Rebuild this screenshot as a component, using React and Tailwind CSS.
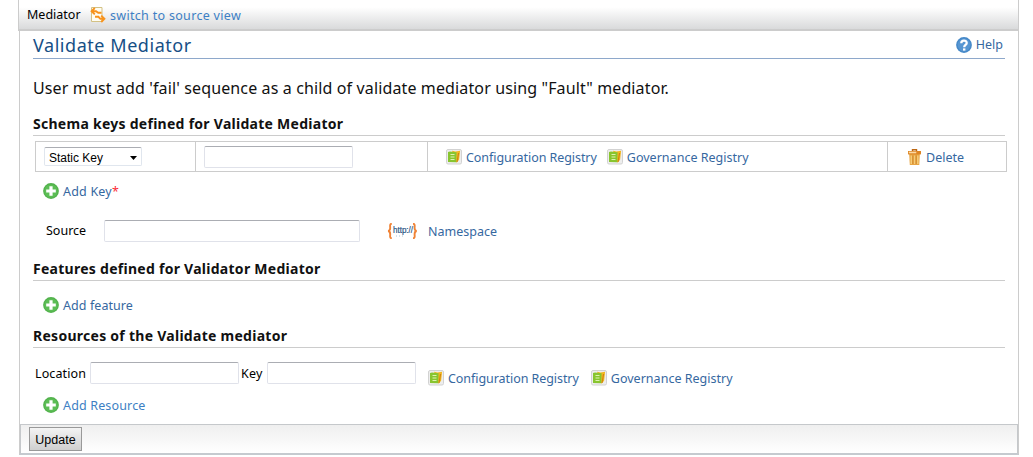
function AddIcon() {
  return (
    <svg className="h-4 w-4 shrink-0" viewBox="0 0 16 16">
      <circle cx="8" cy="8" r="7.9" fill="#52b24c" />
      <circle cx="8" cy="8" r="6.6" fill="#5cbd55" />
      <path d="M6.4 3.2h3.2v3.2h3.2v3.2H9.6v3.2H6.4V9.6H3.2V6.4h3.2z" fill="#fff" />
    </svg>
  );
}

function RegistryIcon() {
  return (
    <svg className="h-4 w-4 shrink-0" viewBox="0 0 16 16">
      <rect x="0.5" y="0.5" width="15" height="14.5" rx="1.5" fill="#ededed" stroke="#d2d2d2" />
      <path d="M6 1.8l3.500.8 4.600-.8-1 9-2.600 3z" fill="#f3b71f" />
      <path d="M12.600 4l-1.600 9" stroke="#cf8512" strokeWidth="1.200" />
      <path d="M2 3l2-.5 6.600.8-.4 9.900-8.200-.2z" fill="#88c52f" />
      <path d="M4.500 5.500h4M4.500 8h4M4.500 10.500h4" stroke="#def3b0" strokeWidth="1.100" />
    </svg>
  );
}

function SwitchIcon() {
  return (
    <svg className="h-4 w-4 shrink-0" viewBox="0 0 16 16">
      <path d="M1.500.5h10.500v14H1.500z" fill="#fffdf2" stroke="#d3c184" />
      <path d="M4.800 1L1.600 4.200 4.800 7.400M1.800 4.200H6l2.200 1.600h3.300M11.200 8.600l3.200 3.200-3.200 3.200M14 11.800h-3.600l-2-2H5" fill="none" stroke="#f8931d" strokeWidth="1.900" />
    </svg>
  );
}

function HelpIcon() {
  return (
    <svg className="h-4 w-4 shrink-0" viewBox="0 0 16 16">
      <circle cx="8" cy="8" r="7.9" fill="#4588c8" />
      <circle cx="8" cy="8" r="6.400" fill="#5796d2" />
      <path d="M5.300 6.200C5.300 2.700 10.700 2.900 10.700 5.900c0 2-2.500 2-2.500 4.300" fill="none" stroke="#fff" strokeWidth="2.300" />
      <rect x="7" y="11.400" width="2.400" height="2.200" fill="#fff" />
    </svg>
  );
}

function TrashIcon() {
  return (
    <svg className="h-4 w-[13px] shrink-0" viewBox="0 0 13 16">
      <path d="M4.500 2.200V.8h4v1.400" fill="none" stroke="#bd6712" strokeWidth="1.400" />
      <path d="M1.200 5h10.600l-.5 11H1.800z" fill="#e8a543" />
      <path d="M3.300 6.500v8.500M6.500 6.500v8.500M9.800 6.500v8.500" stroke="#f6cc78" strokeWidth="1.500" />
      <path d="M4.900 6.500v8.500M8.200 6.500v8.500" stroke="#c98128" strokeWidth=".8" />
      <path d="M0 2h13v3.400H0z" fill="#dd8524" />
      <path d="M.8 3.500h7.500" stroke="#fbd9a4" strokeWidth="1.600" />
    </svg>
  );
}

function NamespaceIcon() {
  return (
    <svg className="h-4 w-[31px] shrink-0" viewBox="0 0 31 16">
      <path d="M4.800.8C2.500.8 3.200 3 3.200 5s-.4 2.600-2 3c1.600.4 2 1 2 3s-.7 4.200 1.600 4.200M26 .8c2.300 0 1.600 2.200 1.600 4.200s.4 2.600 2 3c-1.600.4-2 1-2 3s.7 4.200-1.600 4.200" fill="none" stroke="#f08336" strokeWidth="1.900" />
      <text x="6" y="9.500" fontSize="9.500" textLength="20" lengthAdjust="spacingAndGlyphs" fill="#245282" stroke="#245282" strokeWidth=".2" fontFamily="Liberation Sans, sans-serif">http://</text>
      <path d="M9 13h1M12 13h1M15 13h1" stroke="#a9c8dc" />
    </svg>
  );
}

const field =
  "shrink-0 rounded-[2px] border border-[#e0e2ea] border-t-[#abadb3] bg-white outline-none";

function SectionHeading({ children, className }) {
  return (
    <h2 className={`ml-[13px] mr-[13px] flex shrink-0 items-end whitespace-nowrap border-b border-[#cccccc] pb-[2px] text-[14px] font-bold leading-[18px] text-[#111] ${className}`}>
      {children}
    </h2>
  );
}

function Registries({ gap }) {
  return (
    <div className={`flex items-center ${gap}`}>
      <a className="flex items-center gap-1">
        <RegistryIcon />
        <span className="pt-[2px] tracking-[-0.06px]">Configuration Registry</span>
      </a>
      <a className="flex items-center gap-1">
        <RegistryIcon />
        <span className="pt-[2px] tracking-[0.02px]">Governance Registry</span>
      </a>
    </div>
  );
}

export default function App() {
  return (
    <div className="h-[457px] w-[1033px] overflow-hidden bg-white pl-[18px] font-['Noto_Sans','Open_Sans',sans-serif] text-[12.5px] leading-4 whitespace-nowrap text-[#36689f]">
      <header className="flex h-[31px] w-[1001px] items-center border-x border-b-2 border-[#cccccc] bg-linear-to-b from-white from-25% to-[#d9dadb] pl-2">
        <span className="w-[63px] text-black">Mediator</span>
        <SwitchIcon />
        <a className="ml-1 pt-[2px] tracking-[0.31px] text-[#3d7fc4]">switch to source view</a>
      </header>

      <main className="ml-px flex h-[424px] w-[1000px] flex-col border-x border-b-2 border-[#cccccc] border-b-[#c5cacf]">
        <div className="mx-[13px] flex h-7 shrink-0 items-center justify-between border-b border-[#8ea8cb]">
          <h1 className="text-[18px] leading-6 tracking-[0.55px] text-[#164f86]">Validate Mediator</h1>
          <a className="flex items-center gap-1 pr-[2px]">
            <HelpIcon />
            <span>Help</span>
          </a>
        </div>

        <p className="ml-[13px] mt-[17px] mb-px h-6 shrink-0 text-[16px] leading-6 tracking-[0.13px] text-[#111]">
          User must add 'fail' sequence as a child of validate mediator using "Fault" mediator.
        </p>

        <SectionHeading className="h-[35px] tracking-[0.27px]">Schema keys defined for Validate Mediator</SectionHeading>

        <div className="ml-[15px] mt-[5px] grid h-[31px] w-[972px] shrink-0 grid-cols-[160px_232px_460px_1fr] divide-x divide-[#cccccc] border border-[#cccccc]">
          <div className="flex items-center pl-2">
            <div className="flex h-[19px] w-[98px] items-center justify-between rounded-[2px] border border-[#e0e6ee] border-t-[#abadb3] pl-1 pr-1 font-['Liberation_Sans',sans-serif] text-[12px] text-black">
              <span className="pt-[2px]">Static Key</span>
              <svg className="mt-[2px] h-1 w-[7px]" viewBox="0 0 7 4"><path d="M0 0h7L3.500 4z" fill="#000" /></svg>
            </div>
          </div>
          <div className="flex items-center pl-2">
            <input className={`${field} h-[22px] w-[149px]`} />
          </div>
          <div className="flex items-center pl-[18px]">
            <Registries gap="gap-[10px]" />
          </div>
          <div className="flex items-center pl-5">
            <a className="flex items-center gap-[5px]">
              <TrashIcon />
              <span className="pt-[2px]">Delete</span>
            </a>
          </div>
        </div>

        <div className="ml-[23px] mt-[11px] flex h-4 shrink-0 items-center gap-1">
          <AddIcon />
          <a className="pt-[2px] tracking-[0.2px]">Add Key<span className="text-red-500">*</span></a>
        </div>

        <div className="ml-[26px] mt-[21px] flex h-[22px] shrink-0 items-center">
          <label className="w-[58px] text-black">Source</label>
          <input className={`${field} h-[22px] w-[256px]`} />
          <a className="ml-[27px] flex items-center gap-[10px]">
            <NamespaceIcon />
            <span className="pt-[2px]">Namespace</span>
          </a>
        </div>

        <SectionHeading className="h-[39px] tracking-[0.27px]">Features defined for Validator Mediator</SectionHeading>

        <div className="ml-[23px] mt-4 flex h-4 shrink-0 items-center gap-1">
          <AddIcon />
          <a className="pt-[2px] tracking-[0.07px]">Add feature</a>
        </div>

        <SectionHeading className="h-[35px] tracking-[0.27px]">Resources of the Validate mediator</SectionHeading>

        <div className="ml-[15px] mt-[14px] flex h-[22px] shrink-0 items-center text-black">
          <label className="w-[55px] pt-[2px] tracking-[0.1px]">Location</label>
          <input className={`${field} h-[22px] w-[149px]`} />
          <label className="w-[28px] pt-[2px] pl-[2px] tracking-[0.2px]">Key</label>
          <input className={`${field} h-[22px] w-[149px]`} />
          <div className="ml-3 mt-[10px] text-[#36689f]">
            <Registries gap="gap-3" />
          </div>
        </div>

        <div className="ml-[23px] mt-[13px] flex h-4 shrink-0 items-center gap-1">
          <AddIcon />
          <a className="pt-[2px] tracking-[0.15px] text-[#3d7fc4]">Add Resource</a>
        </div>

        <footer className="mt-auto flex h-[29px] shrink-0 items-center border-t border-r border-l border-[#c5c8cb] bg-linear-to-b from-[#efefef] to-white pl-2">
          <button className="h-6 w-[53px] border border-[#999] bg-linear-to-b from-[#f4f4f4] to-[#cfcfcf] pt-[2px] font-['Liberation_Sans',sans-serif] text-[12.5px] leading-4 text-black">
            Update
          </button>
        </footer>
      </main>
    </div>
  );
}
